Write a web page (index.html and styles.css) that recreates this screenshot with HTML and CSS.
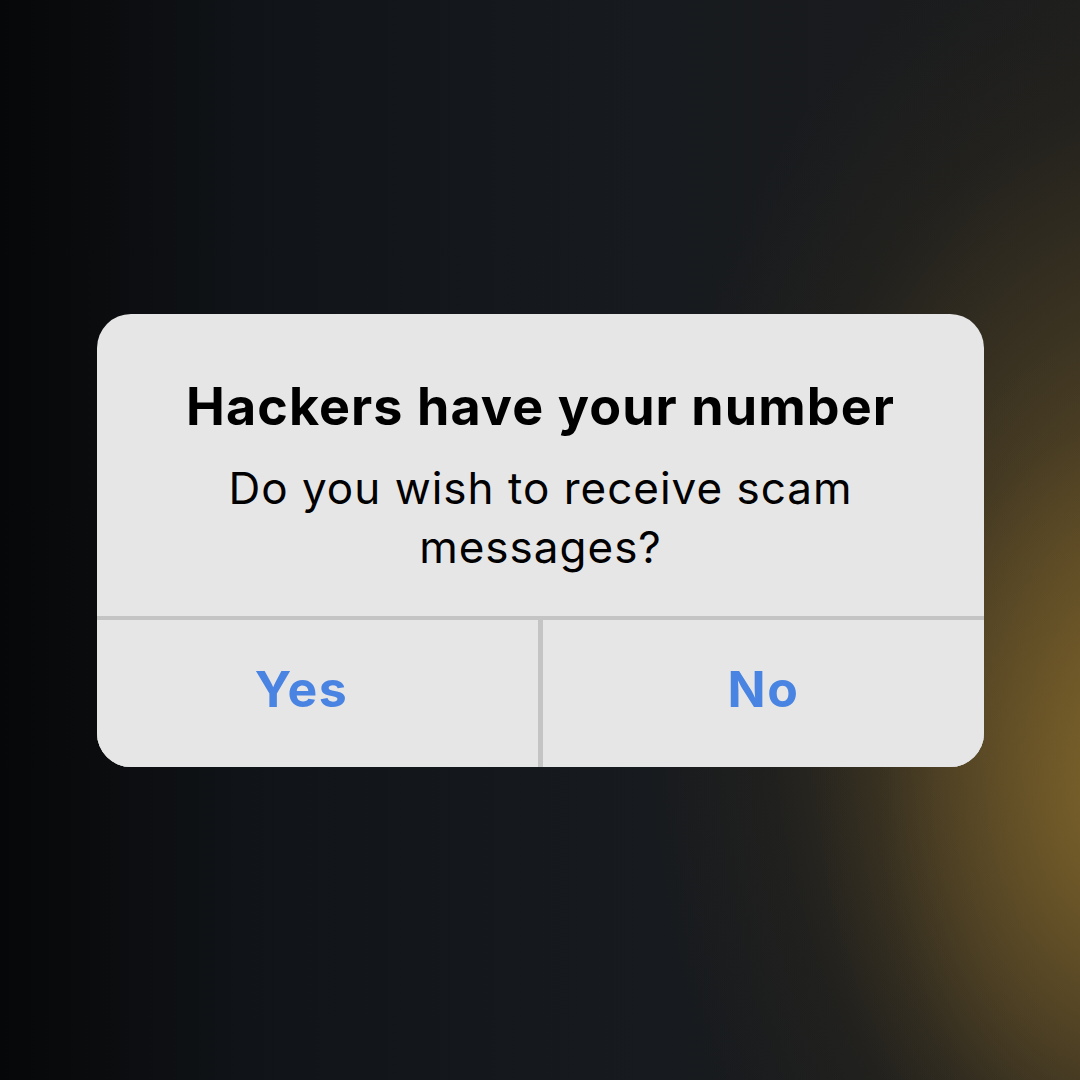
FILE: index.html
```html
<!DOCTYPE html>
<html lang="en">
<head>
<meta charset="utf-8">
<link rel="stylesheet" href="styles.css">
</head>
<body>
<div class="scene">
  <div class="alert">
    <div class="alert-content">
      <h1 class="alert-title">Hackers have your number</h1>
      <p class="alert-message">Do you wish to receive scam messages?</p>
    </div>
    <div class="alert-actions">
      <div class="alert-btn alert-btn-yes">Yes</div>
      <div class="alert-btn alert-btn-no">No</div>
    </div>
  </div>
</div>
</body>
</html>
```

FILE: styles.css
```css
html, body {
  margin: 0;
  padding: 0;
}
body {
  font-family: "Inter", "Noto Sans", sans-serif;
}
.scene {
  width: 1080px;
  height: 1080px;
  display: flex;
  align-items: center;
  justify-content: center;
  background:
    radial-gradient(ellipse 300px 460px at 1120px 800px, rgba(140,110,45,0.7) 0%, rgba(125,98,42,0.4) 45%, rgba(90,72,35,0.12) 80%, rgba(0,0,0,0) 100%),
    radial-gradient(ellipse 520px 780px at 1160px 680px, rgba(125,98,42,0.8) 0%, rgba(105,84,40,0.5) 40%, rgba(70,58,32,0.18) 75%, rgba(0,0,0,0) 100%),
    linear-gradient(90deg, #060708 0%, #101317 22%, #171a1e 60%, #1b1c1d 100%);
}
.alert {
  width: 887px;
  height: 453px;
  background: #e6e6e6;
  border-radius: 34px;
  display: flex;
  flex-direction: column;
  overflow: hidden;
  margin-left: 1px;
}
.alert-content {
  height: 306px;
  box-sizing: border-box;
  padding: 62px 40px 0;
  text-align: center;
  border-bottom: 4px solid #c4c4c4;
}
.alert-title {
  margin: 0;
  font-size: 52px;
  font-weight: 700;
  line-height: 62px;
  letter-spacing: 1.1px;
  color: #000;
}
.alert-message {
  margin: 21px auto 0;
  font-size: 44px;
  font-weight: 400;
  line-height: 59px;
  letter-spacing: 1px;
  color: #000;
  max-width: 660px;
}
.alert-actions {
  flex: 1;
  display: grid;
  grid-template-columns: 1fr 1fr;
  column-gap: 5px;
  background: #c4c4c4;
}
.alert-btn {
  display: flex;
  align-items: center;
  justify-content: center;
  font-size: 50px;
  font-weight: 700;
  letter-spacing: 1.5px;
  color: #4a84e2;
  background: #e6e6e6;
  padding-bottom: 8px;
}
.alert-btn-yes {
  padding-right: 32px;
}
```
